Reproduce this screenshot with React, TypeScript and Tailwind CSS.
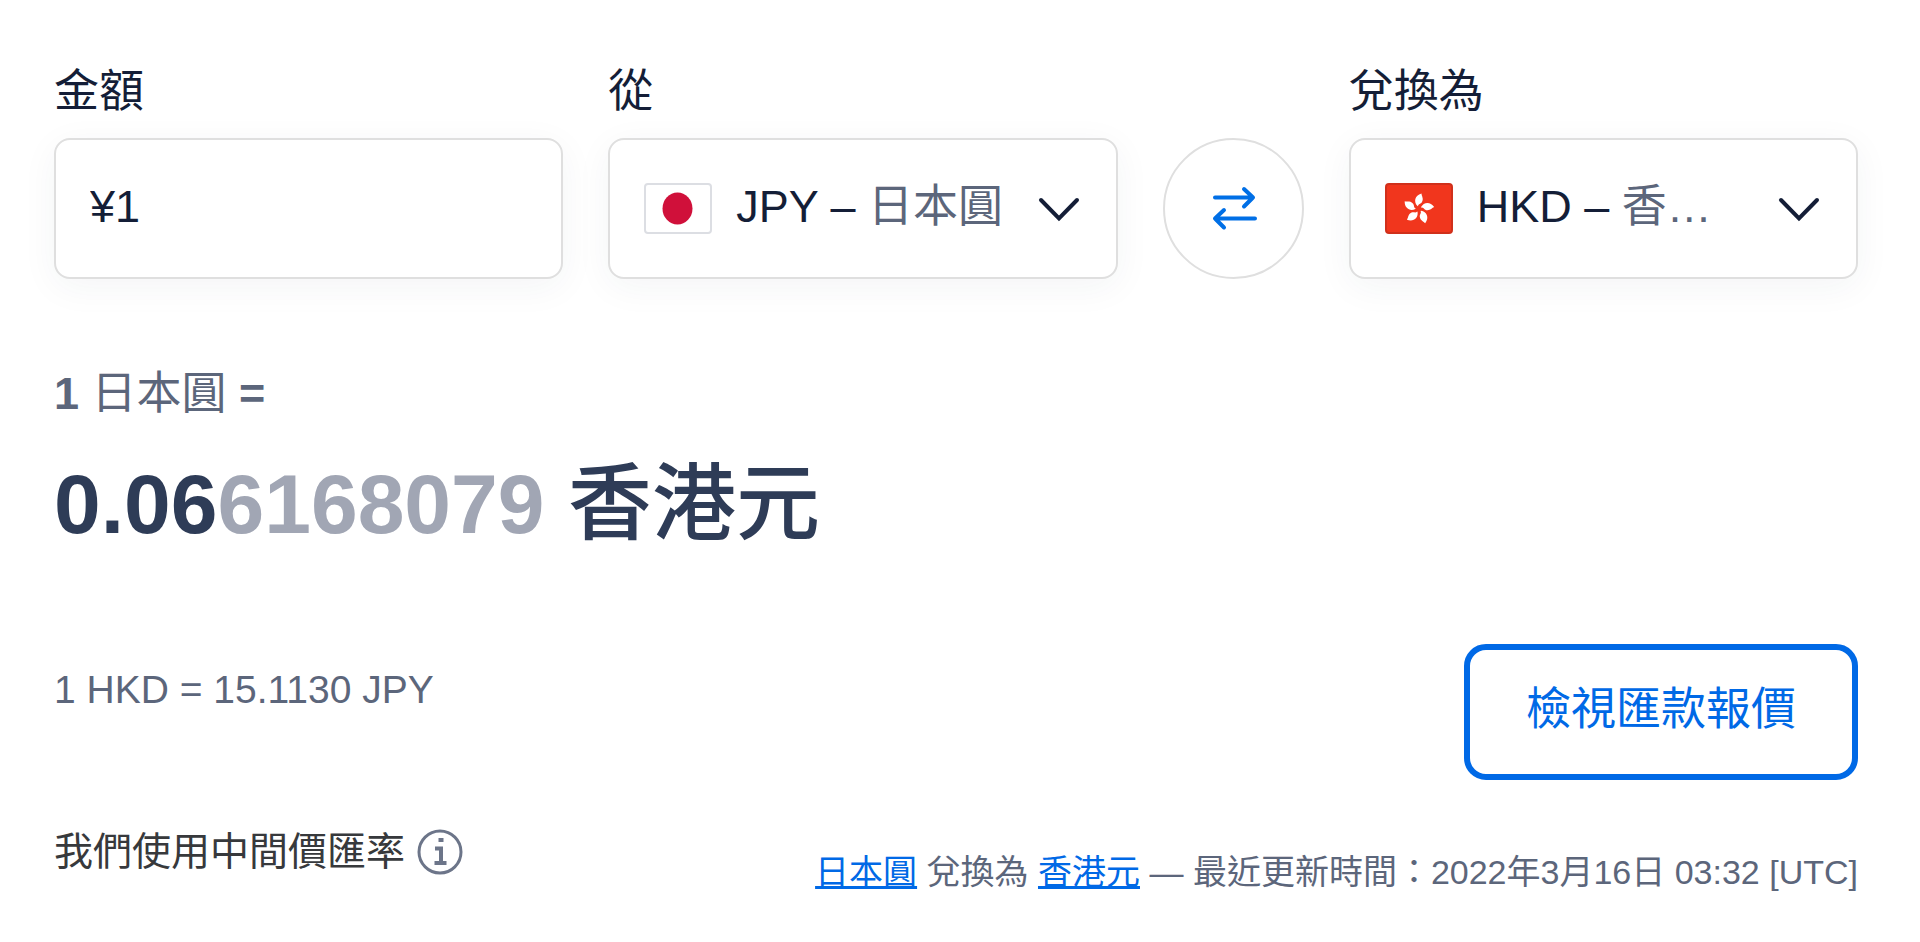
import React, { useState } from "react";

interface Currency {
  code: string;
  name: string;
  symbol: string;
}

const currencies: Currency[] = [
  { code: "JPY", name: "日本圓", symbol: "¥" },
  { code: "HKD", name: "香港元", symbol: "$" },
];

function Flag({ code }: { code: string }) {
  if (code === "JPY") {
    return (
      <svg viewBox="0 0 68 51" className="w-[68px] h-[51px] shrink-0" aria-hidden="true">
        <rect x="1" y="1" width="66" height="49" rx="3" fill="#fff" stroke="#dcdee3" strokeWidth="2" />
        <ellipse cx="33.5" cy="25.5" rx="15" ry="16" fill="#d0103a" />
      </svg>
    );
  }

  return (
    <svg viewBox="0 0 68 51" className="w-[68px] h-[51px] shrink-0" aria-hidden="true">
      <rect x="1" y="1" width="66" height="49" rx="3" fill="#f1361d" stroke="#d0301b" strokeWidth="2" />
      <g fill="#fff">
        {[0, 72, 144, 216, 288].map((angle) => (
          <path
            key={angle}
            d="M32.5 23C28.5 19 29.5 12.5 36.5 10.5C36.5 13 39 15.5 37 19C35.8 21.2 33.5 20.5 33 23.200Z"
            transform={`rotate(${angle} 33.500 26)`}
          />
        ))}
      </g>
    </svg>
  );
}

interface CurrencySelectProps {
  id: string;
  label: string;
  value: string;
  onChange: (code: string) => void;
}

function CurrencySelect({ id, label, value, onChange }: CurrencySelectProps) {
  const current = currencies.find((c) => c.code === value) ?? currencies[0];

  return (
    <div className="flex-1 min-w-0">
      <label htmlFor={id} className="block leading-[60px] mb-4">{label}</label>
      <div className="relative flex items-center h-[141px] pl-[34px] pr-9 bg-white border-2 border-[#dfdfdf] rounded-2xl shadow-[0_8px_36px_rgba(35,55,80,0.05)]">
        <Flag code={current.code} />
        <span className="flex-1 min-w-0 mx-6 truncate pb-1 text-[#5c667b]">
          <span className="text-[#141e37]">{current.code} –</span> {current.name}
        </span>
        <svg viewBox="0 0 42 42" className="size-[42px] shrink-0" fill="none" stroke="#141e37" strokeWidth="4" strokeLinecap="round" aria-hidden="true">
          <path d="M3 12L21 30.500L39 12" />
        </svg>
        <select
          id={id}
          value={value}
          onChange={(e) => onChange(e.target.value)}
          className="absolute inset-0 w-full h-full opacity-0 cursor-pointer"
        >
          {currencies.map((c) => (
            <option key={c.code} value={c.code}>{c.code} – {c.name}</option>
          ))}
        </select>
      </div>
    </div>
  );
}

export default function App() {
  const [amount, setAmount] = useState("¥1");
  const [from, setFrom] = useState("JPY");
  const [to, setTo] = useState("HKD");

  const handleSwap = () => {
    setFrom(to);
    setTo(from);
  };

  return (
    <main className="min-h-screen bg-white pl-[54px] pr-[62px] pt-[62px] text-[45px] text-[#141e37] font-['Liberation_Sans','Noto_Sans_CJK_TC',sans-serif]">
      <form className="flex items-end gap-[45px]" onSubmit={(e) => e.preventDefault()}>
        <div className="flex-1 min-w-0">
          <label htmlFor="amount" className="block leading-[60px] mb-4">金額</label>
          <input
            id="amount"
            type="text"
            value={amount}
            onChange={(e) => setAmount(e.target.value)}
            className="block w-full h-[141px] px-[34px] pb-1 bg-white border-2 border-[#dfdfdf] rounded-2xl shadow-[0_8px_36px_rgba(35,55,80,0.05)]"
          />
        </div>
        <CurrencySelect id="from" label="從" value={from} onChange={setFrom} />
        <button
          type="button"
          onClick={handleSwap}
          aria-label="交換貨幣"
          className="flex items-center justify-center size-[141px] shrink-0 rounded-full border-2 border-[#dfdfdf] bg-white"
        >
          <svg viewBox="0 0 48 48" className="size-12" fill="none" stroke="#006fe6" strokeWidth="4" strokeLinecap="round" strokeLinejoin="round" aria-hidden="true">
            <path d="M6 12.500H44M35 4L44 12.500L35 21.500" />
            <path d="M46 33.500H6M15 25L6 33.500L15 42.500" />
          </svg>
        </button>
        <CurrencySelect id="to" label="兌換為" value={to} onChange={setTo} />
      </form>

      <section className="mt-[85px]">
        <p className="leading-[60px] font-bold text-[#5c667b]">
          1 <span className="font-normal">日本圓</span> =
        </p>
        <p className="mt-5 text-[84px] leading-[120px] font-bold text-[#2e3c57]">
          0.06<span className="text-[#a1a6b4]">6168079</span> <span className="font-medium">香港元</span>
        </p>
      </section>

      <div className="mt-20 flex items-start justify-between">
        <p className="mt-4 text-[39px] leading-[60px] text-[#5c667b]">1 HKD = 15.1130 JPY</p>
        <button
          type="button"
          className="h-[136px] px-14 pb-1 border-[6px] border-[#0069e6] rounded-[22px] text-[#0069e6]"
        >
          檢視匯款報價
        </button>
      </div>

      <footer className="mt-[42px] flex items-start justify-between">
        <div className="flex items-center gap-3 text-[39px] leading-[60px] text-[#37393c]">
          我們使用中間價匯率
          <button type="button" aria-label="說明">
            <svg viewBox="0 0 46 46" className="size-[46px]" fill="none" stroke="#6c7589" strokeWidth="3" aria-hidden="true">
              <circle cx="23" cy="23" r="21" />
              <path d="M18 19.500H24V34M17.500 34H29.500" strokeWidth="4" />
              <path d="M21.500 11H26.500" strokeWidth="4" />
            </svg>
          </button>
        </div>
        <p className="mt-5 text-[34px] leading-[60px] text-[#5c667b]">
          <a href="#jpy" className="text-[#0069e6] underline">日本圓</a> 兌換為{" "}
          <a href="#hkd" className="text-[#0069e6] underline">香港元</a> — 最近更新時間：2022年3月16日 03:32 [UTC]
        </p>
      </footer>
    </main>
  );
}
